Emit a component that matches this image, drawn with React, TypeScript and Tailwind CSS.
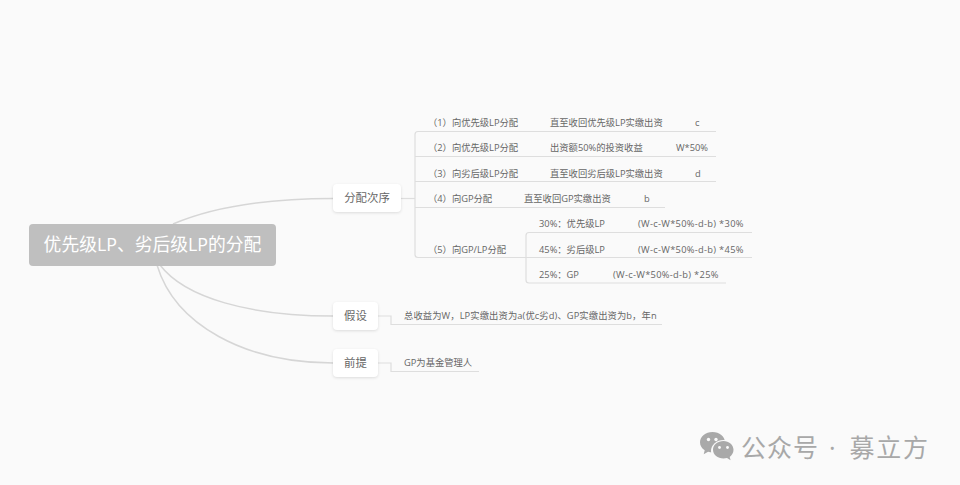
const font = "font-['Open_Sans','Noto_Sans_CJK_SC','Liberation_Sans',sans-serif]";

// one line of text on a branch: cells sit side by side, widths set where the next cell starts
function Row({ cells }: { cells: [string, string][] }) {
  return (
    <div className="flex h-[25.4px] items-center whitespace-nowrap text-[9.3px] text-[#666666]">
      {cells.map(([text, width]) => (
        <span key={text} className={width}>{text}</span>
      ))}
    </div>
  );
}

function Topic({ className, children }: { className: string; children: string }) {
  return (
    <div className={`absolute flex h-[28px] items-center justify-center rounded-[4px] bg-white pb-[1px] text-[11.4px] text-[#666666] shadow-[0_1px_3px_rgba(0,0,0,0.12)] ${className}`}>
      {children}
    </div>
  );
}

function Lines() {
  return (
    <svg className="absolute left-0 top-0" width="960" height="485" fill="none">
      <g stroke="#d6d6d6" strokeWidth="1.5">
        <path d="M173 224C215 206 270 198.5 333 198.5" />
        <path d="M160 265C185 298 250 316 333 316" />
        <path d="M157 265C175 325 245 363 333 363" />
      </g>
      <g stroke="#dedede" strokeWidth="1.2">
        <path d="M401 198.5H415" />
        <path d="M716 131.500H418Q415 131.500 415 134.500V254.500Q415 257.500 418 257.500H526" />
        <path d="M415 156.500H716" />
        <path d="M415 181.500H716" />
        <path d="M415 207.500H665" />
        <path d="M752 232.500H529Q526 232.500 526 235.500V280Q526 283 529 283H726" />
        <path d="M526 257.500H752" />
        <path d="M378 316H391V324.500H662" />
        <path d="M378 363H391V371.500H479" />
      </g>
    </svg>
  );
}

function WechatIcon() {
  return (
    <svg width="38" height="32" viewBox="0 0 38 32">
      <path d="M13.500 1C6.600 1 1 5.600 1 11.300c0 3.300 1.800 6.100 4.700 8l-1 4 4.400-2.500c1.400.4 2.900.6 4.400.6 6.900 0 12.500-4.600 12.500-10.100S20.400 1 13.500 1z" fill="#a9a9a9" />
      <ellipse cx="24.500" cy="20" rx="12.500" ry="11" fill="#fafafa" />
      <path d="M24.500 10C18.700 10 14 13.900 14 18.800s4.700 8.800 10.500 8.800c1.200 0 2.400-.2 3.500-.5l3.600 2.100-.9-3.300c2.300-1.600 3.800-4.100 3.800-7.100 0-4.900-4.700-8.800-10-8.800z" fill="#a9a9a9" />
      <circle cx="9.500" cy="8.500" r="1.700" fill="#fafafa" />
      <circle cx="17" cy="8.500" r="1.700" fill="#fafafa" />
      <circle cx="20.500" cy="16.500" r="1.400" fill="#fafafa" />
      <circle cx="28.500" cy="16.500" r="1.400" fill="#fafafa" />
    </svg>
  );
}

export default function App() {
  return (
    <div className={`relative h-[485px] w-[960px] overflow-hidden bg-[#fafafa] ${font}`}>
      <Lines />

      {/* main topic */}
      <div className="absolute left-[29px] top-[224px] flex h-[42px] w-[247px] items-center justify-center rounded-[4px] bg-[#bfbfbf] pb-[1px] text-[17.8px] text-white">
        优先级LP、劣后级LP的分配
      </div>

      <Topic className="left-[333px] top-[184px] w-[68px]">分配次序</Topic>
      <Topic className="left-[333px] top-[302px] w-[45px]">假设</Topic>
      <Topic className="left-[333px] top-[349px] w-[45px]">前提</Topic>

      {/* 分配次序 branch */}
      <div className="absolute left-[428px] top-[110px] flex flex-col">
        <Row cells={[['（1）向优先级LP分配', 'w-[122px]'], ['直至收回优先级LP实缴出资', 'w-[145px]'], ['c', '']]} />
        <Row cells={[['（2）向优先级LP分配', 'w-[122px]'], ['出资额50%的投资收益', 'w-[126px]'], ['W*50%', '']]} />
        <Row cells={[['（3）向劣后级LP分配', 'w-[122px]'], ['直至收回劣后级LP实缴出资', 'w-[145px]'], ['d', '']]} />
        <Row cells={[['（4）向GP分配', 'w-[96px]'], ['直至收回GP实缴出资', 'w-[120px]'], ['b', '']]} />
        <div className="flex items-center">
          <div className="w-[111px] whitespace-nowrap text-[9.3px] text-[#666666]">（5）向GP/LP分配</div>
          <div className="flex flex-col">
            <Row cells={[['30%：优先级LP', 'w-[99px]'], ['(W-c-W*50%-d-b) *30%', 'tracking-[0.3px]']]} />
            <Row cells={[['45%：劣后级LP', 'w-[99px]'], ['(W-c-W*50%-d-b) *45%', 'tracking-[0.3px]']]} />
            <Row cells={[['25%：GP', 'w-[74px]'], ['(W-c-W*50%-d-b) *25%', 'tracking-[0.3px]']]} />
          </div>
        </div>
      </div>

      <div className="absolute left-[404px] top-[303px]">
        <Row cells={[['总收益为W，LP实缴出资为a(优c劣d)、GP实缴出资为b，年n', 'tracking-[0.1px]']]} />
      </div>
      <div className="absolute left-[404px] top-[350px]">
        <Row cells={[['GP为基金管理人', '']]} />
      </div>

      {/* watermark */}
      <div className="absolute left-[699px] top-[430px] flex items-center text-[25px] leading-[34px] text-[#a8a8a8]">
        <WechatIcon />
        <span className="ml-[4px] tracking-[1px]">公众号</span>
        <span className="ml-[10px] w-[20.5px]">·</span>
        <span className="tracking-[1.7px]">募立方</span>
      </div>
    </div>
  );
}
